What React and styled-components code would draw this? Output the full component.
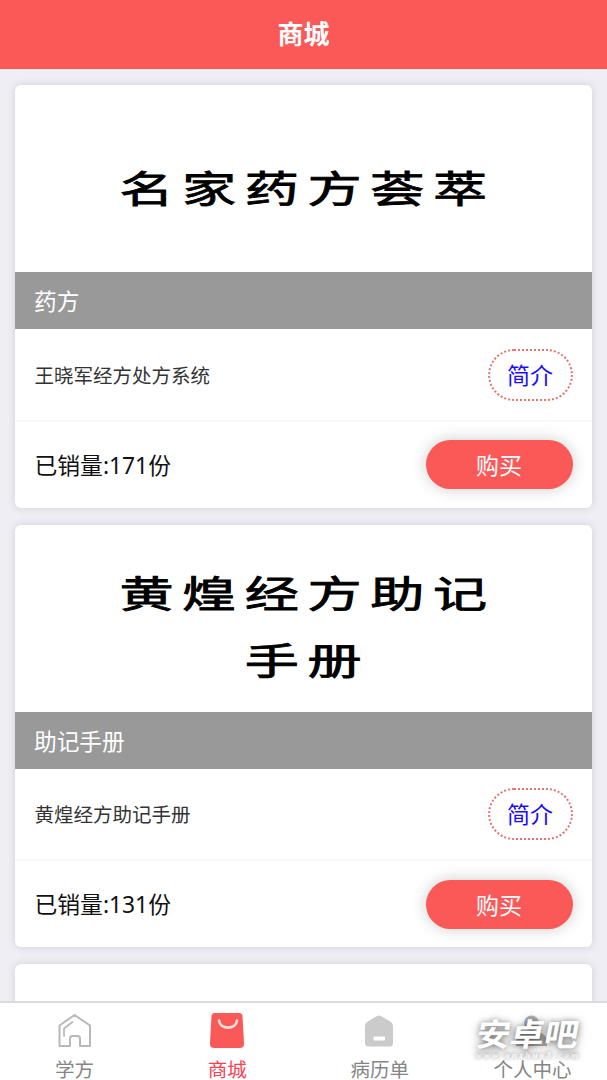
import React from "react";
import styled, { createGlobalStyle } from "styled-components";

const GlobalStyle = createGlobalStyle`
  * { box-sizing: border-box; }
  body { margin: 0; background: #efeef4; }
`;

const Page = styled.div`
  display: flex;
  flex-direction: column;
  width: 100%;
  height: 1080px;
  overflow: hidden;
  background: #efeef4;
  font-family: "Noto Sans", "Noto Sans CJK SC", sans-serif;
  color: #111;
`;

const Header = styled.header`
  flex: none;
  height: 69px;
  line-height: 68px;
  background: #fb5858;
  border-bottom: 1px solid #fb5050;
  color: #fff;
  font-size: 26px;
  font-weight: 700;
  text-align: center;
`;

const List = styled.main`
  flex: 1;
  min-height: 0;
  overflow: hidden;
  display: flex;
  flex-direction: column;
  gap: 17px;
  padding: 16px 15.5px 0 14.5px;
`;

const Card = styled.article`
  flex: none;
  height: 422.5px;
  background: #fff;
  border-radius: 6px;
  box-shadow: 0 0 9px rgba(0, 0, 0, 0.13);
`;

const Cover = styled.div`
  height: 187px;
  display: flex;
  flex-direction: column;
  align-items: center;
  padding-top: ${(p) => p.$top}px;
`;

const CoverLine = styled.div`
  height: 67.5px;
  line-height: 67.5px;
  font-size: 41px;
  font-weight: 400;
  -webkit-text-stroke: 0.9px #000;
  letter-spacing: 6.5px;
  margin-right: -8px;
  white-space: nowrap;
  color: #000;
  transform: scale(1.32, 0.91);
`;

const Category = styled.div`
  height: 57px;
  line-height: 60px;
  padding-left: 19.5px;
  background: #999;
  color: #fff;
  font-size: 22.7px;
`;

const Row = styled.div`
  display: flex;
  align-items: center;
  justify-content: space-between;
  height: ${(p) => p.$height}px;
  padding: 0 19px 0 20px;
  border-bottom: ${(p) => (p.$divided ? "2px solid #f7f7f7" : "none")};
`;

const Name = styled.span`
  font-size: 19.5px;
  line-height: 28px;
  color: #333;
  padding-top: 3px;
`;

const Sold = styled.span`
  font-size: 22.8px;
  line-height: 32px;
  color: #111;
  padding-top: 2px;
`;

const Intro = styled.a`
  width: 85px;
  height: 52px;
  line-height: 49px;
  margin-top: 1px;
  border: 2px dotted #e27370;
  border-radius: 26px;
  color: #1a0dff;
  font-size: 23px;
  text-align: center;
`;

const Buy = styled.button`
  width: 147px;
  height: 49px;
  padding: 0 0 1px;
  border: 0;
  border-radius: 25px;
  background: #fb5858;
  box-shadow: 0 0 16px rgba(0, 0, 0, 0.2);
  color: #fff;
  font: inherit;
  font-size: 23px;
`;

const Tabs = styled.nav`
  position: relative;
  flex: none;
  display: grid;
  grid-template-columns: repeat(4, 1fr);
  height: 79px;
  margin: 0 -1.75px;
  border-top: 2px solid #dadada;
  background: #fff;
`;

const Tab = styled.div`
  display: flex;
  flex-direction: column;
  align-items: center;
  padding-top: 8px;
  color: ${(p) => (p.$active ? "#fb3f52" : "#858585")};
  font-family: "Noto Sans CJK SC", sans-serif;
  font-size: 19.5px;
  line-height: 20px;

  svg { display: block; margin-bottom: 10px; }
`;

const Watermark = styled.div`
  position: absolute;
  left: 474.75px;
  top: 13px;
  width: 110px;
  color: #fff;
`;

const MarkName = styled.div`
  font-family: "Noto Sans CJK SC", sans-serif;
  font-size: 34px;
  font-weight: 700;
  line-height: 34px;
  text-align: center;
  white-space: nowrap;
  transform: skewX(-10deg) scaleY(0.93);
  text-shadow: 0 0 5px rgba(0, 0, 0, 0.25), 0 2px 10px rgba(0, 0, 0, 0.5);
`;

const MarkSite = styled.div`
  margin: 1px 0 0 3px;
  font-family: "Liberation Serif", serif;
  font-size: 8.5px;
  font-style: italic;
  font-weight: 700;
  letter-spacing: 2.6px;
  line-height: 8px;
  white-space: nowrap;
  text-shadow: 0 0 4px rgba(0, 0, 0, 0.4), 0 -1px 5px rgba(0, 0, 0, 0.35);
`;

const HomeIcon = () => (
  <svg width="38" height="38" viewBox="0 0 38 38" fill="none" stroke="#b8b8b8" strokeWidth="2" strokeLinejoin="round" strokeLinecap="round">
    <path d="M18.500 4 34 14.500V35H24V27.500a2.500 2.500 0 0 0-2.500-2.500h-5a2.500 2.500 0 0 0-2.500 2.500V35H3.500V14.500Z" />
    <path d="M8 25v-7.500l8.500-6.500" strokeWidth="1.7" />
  </svg>
);

const BagIcon = () => (
  <svg width="38" height="38" viewBox="0 0 38 38">
    <path d="M7 2h24q3.200 0 3.500 3.200L36 32q.2 5-4.500 5h-25Q1.800 37 2 32L3.500 5.200Q3.800 2 7 2Z" fill="#fb5858" />
    <path d="M11 9.500c1 9.500 17 9.500 18 0" fill="none" stroke="#ffe2e0" strokeWidth="2.600" strokeLinecap="round" />
  </svg>
);

const RecordIcon = () => (
  <svg width="38" height="38" viewBox="0 0 38 38">
    <path d="M15.500 5.300q2.500-1.600 5 0L30 11q2 1.500 2 4V32q0 3.500-3.500 3.500h-21Q4 35.500 4 32V15q0-2.500 2-4Z" fill="#cbcbcb" />
    <rect x="12.500" y="25.500" width="11.500" height="4" rx="1" fill="#fff" />
  </svg>
);

const UserIcon = () => (
  <svg width="38" height="38" viewBox="0 0 38 38" fill="#b5b5b5">
    <circle cx="18.500" cy="12" r="7.500" />
    <path d="M3 35v-4c0-7.500 6-10.500 15.500-10.500S34 23.500 34 31v4Z" />
  </svg>
);

const products = [
  { cover: ["名家药方荟萃"], top: 70, category: "药方", name: "王晓军经方处方系统", sold: 171 },
  { cover: ["黄煌经方助记", "手册"], top: 35, category: "助记手册", name: "黄煌经方助记手册", sold: 131 },
];

const tabs = [
  { label: "学方", Icon: HomeIcon },
  { label: "商城", Icon: BagIcon, active: true },
  { label: "病历单", Icon: RecordIcon },
  { label: "个人中心", Icon: UserIcon },
];

export default function App() {
  return (
    <Page>
      <GlobalStyle />
      <Header>商城</Header>
      <List>
        {products.map((p) => (
          <Card key={p.category}>
            <Cover $top={p.top}>
              {p.cover.map((line) => <CoverLine key={line}>{line}</CoverLine>)}
            </Cover>
            <Category>{p.category}</Category>
            <Row $height={92.5} $divided>
              <Name>{p.name}</Name>
              <Intro>简介</Intro>
            </Row>
            <Row $height={86}>
              <Sold>已销量:{p.sold}份</Sold>
              <Buy>购买</Buy>
            </Row>
          </Card>
        ))}
        <Card />
      </List>
      <Tabs>
        {tabs.map(({ label, Icon, active }) => (
          <Tab key={label} $active={active}>
            <Icon />
            {label}
          </Tab>
        ))}
        <Watermark>
          <MarkName>安卓吧</MarkName>
          <MarkSite>www.anzhuo8.com</MarkSite>
        </Watermark>
      </Tabs>
    </Page>
  );
}
